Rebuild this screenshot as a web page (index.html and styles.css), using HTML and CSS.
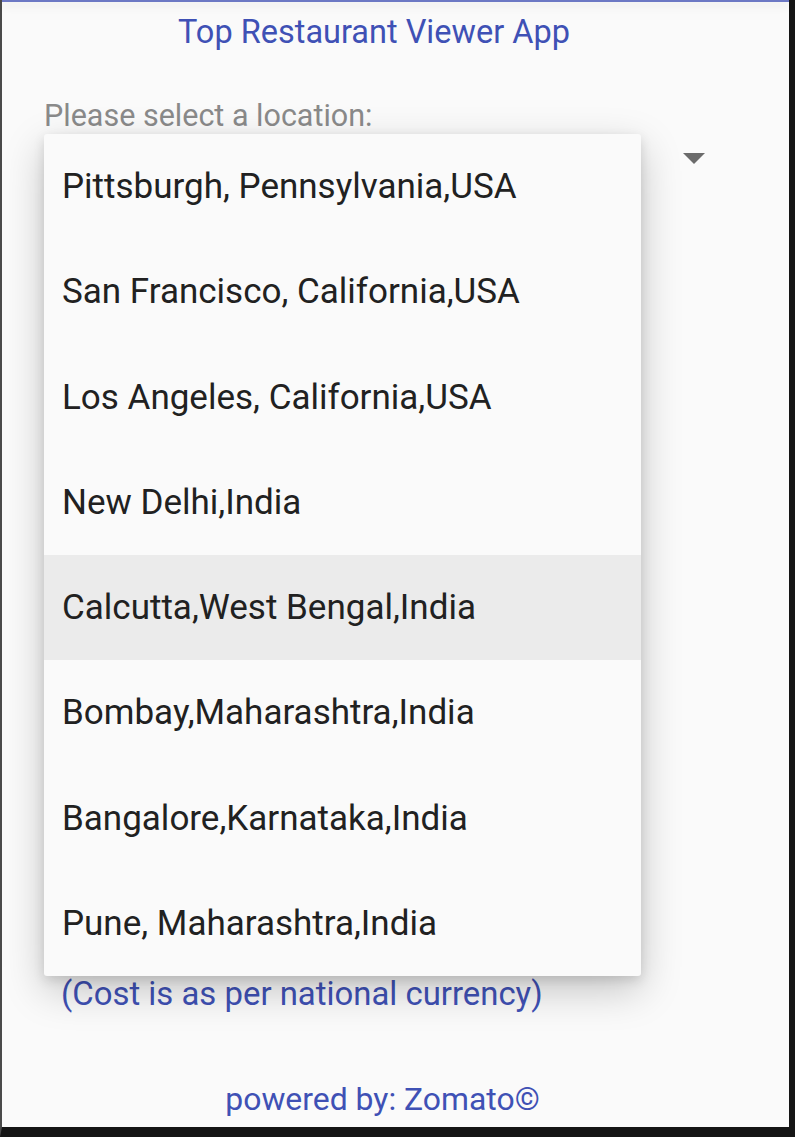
FILE: index.html
```html
<!DOCTYPE html>
<html>
<head>
<meta charset="utf-8">
<link rel="stylesheet" href="styles.css">
</head>
<body>
<div class="screen">
  <div class="topbar"></div>
  <div class="content">
    <h1 class="title">Top Restaurant Viewer App</h1>
    <div class="label">Please select a location:</div>
    <div class="spinner">
      <span class="arrow"></span>
    </div>
    <div class="spacer"></div>
    <div class="cost">(Cost is as per national currency)</div>
    <div class="footer">powered by: Zomato©</div>
  </div>
  <ul class="menu">
    <li class="item">Pittsburgh, Pennsylvania,USA</li>
    <li class="item">San Francisco, California,USA</li>
    <li class="item">Los Angeles, California,USA</li>
    <li class="item">New Delhi,India</li>
    <li class="item selected">Calcutta,West Bengal,India</li>
    <li class="item">Bombay,Maharashtra,India</li>
    <li class="item">Bangalore,Karnataka,India</li>
    <li class="item">Pune, Maharashtra,India</li>
  </ul>
</div>
</body>
</html>
```

FILE: styles.css
```css
html, body {
  margin: 0;
  padding: 0;
  background: #111;
}
body {
  width: 795px;
  height: 1137px;
  overflow: hidden;
  font-family: Roboto, "Liberation Sans", sans-serif;
}
.screen {
  position: relative;
  box-sizing: border-box;
  width: 795px;
  height: 1137px;
  background: #fafafa;
  border-left: 2px solid #4a4a4a;
  border-right: 6px solid #151515;
  border-bottom: 10px solid #151515;
  display: flex;
  flex-direction: column;
}
.topbar {
  height: 2px;
  background: #6c78c4;
  box-shadow: 0 3px 10px rgba(0,0,0,0.16);
  flex: none;
}
.content {
  flex: 1;
  display: flex;
  flex-direction: column;
}
.title {
  margin: 0;
  padding: 10px 43px 0 0;
  font-weight: 400;
  font-size: 32.5px;
  line-height: 40px;
  color: #3f51b5;
  text-align: center;
}
.label {
  margin: 48px 0 0 42px;
  font-size: 30.5px;
  line-height: 32px;
  color: #8a8a8a;
}
.spinner {
  height: 52px;
  margin: 0 84px 0 42px;
  display: flex;
  align-items: center;
  justify-content: flex-end;
}
.arrow {
  width: 0;
  height: 0;
  border-left: 11px solid transparent;
  border-right: 11px solid transparent;
  border-top: 11px solid #6b6b6b;
}
.spacer {
  flex: 1;
}
.cost {
  margin-left: 59px;
  font-size: 32.9px;
  line-height: 40px;
  color: #3f51b5;
}
.footer {
  padding: 65px 26px 8px 0;
  font-size: 31.9px;
  line-height: 40px;
  color: #3f51b5;
  text-align: center;
}
.menu {
  position: absolute;
  left: 42px;
  top: 134px;
  width: 597px;
  margin: 0;
  padding: 0;
  list-style: none;
  background: #fafafa;
  border-radius: 3px;
  box-shadow: 0 14px 40px rgba(0,0,0,0.22), 0 4px 12px rgba(0,0,0,0.12);
}
.item {
  height: 105.25px;
  box-sizing: border-box;
  padding-left: 18px;
  display: flex;
  align-items: center;
  font-size: 35px;
  color: #212121;
}
.item.selected {
  background: #ebebeb;
}
```
